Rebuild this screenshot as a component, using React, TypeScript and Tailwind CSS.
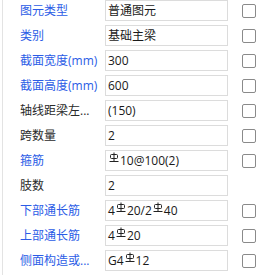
import React from 'react'

type Part = string | { steel: true }

interface Row {
  label: string
  blue: boolean
  value: Part[]
  check: boolean
}

const S: Part = { steel: true }

const rows: Row[] = [
  { label: '图元类型', blue: true, value: ['普通图元'], check: true },
  { label: '类别', blue: true, value: ['基础主梁'], check: true },
  { label: '截面宽度(mm)', blue: true, value: ['300'], check: true },
  { label: '截面高度(mm)', blue: true, value: ['600'], check: true },
  { label: '轴线距梁左...', blue: false, value: ['(150)'], check: true },
  { label: '跨数量', blue: false, value: ['2'], check: true },
  { label: '箍筋', blue: true, value: [S, '10@100(2)'], check: true },
  { label: '肢数', blue: false, value: ['2'], check: false },
  { label: '下部通长筋', blue: true, value: ['4', S, '20/2', S, '40'], check: true },
  { label: '上部通长筋', blue: true, value: ['4', S, '20'], check: true },
  { label: '侧面构造或...', blue: true, value: ['G4', S, '12'], check: true },
]

// HRB400 rebar mark
function Steel() {
  return (
    <svg width="10" height="10" viewBox="0 0 10 10" className="inline-block align-baseline mb-[3px] mx-[1px]" fill="none" stroke="#222" strokeWidth="1">
      <path d="M5 0.5V9.5" />
      <rect x="1.5" y="2.5" width="7" height="4" rx="1" />
      <path d="M0.5 9.5H9.5" />
    </svg>
  )
}

export default function App() {
  return (
    <div
      className="h-[275px] w-[273px] overflow-hidden bg-white pl-[2px] text-[12px]"
      style={{ fontFamily: '"Open Sans", "Noto Sans CJK SC", sans-serif' }}
    >
      <div className="h-full border-l border-[#e3e3e3]">
        {rows.map((r, i) => (
          <div key={i} className="flex h-[21px] mb-[4px] items-center">
            <div
              className={`w-[102px] pl-[17px] whitespace-nowrap leading-[21px] ${r.blue ? 'text-[#2b5ce6]' : 'text-[#2a2a2a]'}`}
            >
              {r.label}
            </div>
            <div className="h-[21px] w-[123px] border border-[#dcdcdc] px-[2px] leading-[19px] text-[#1a1a1a] whitespace-nowrap">
              {r.value.map((p, j) =>
                typeof p === 'string' ? <span key={j}>{p}</span> : <Steel key={j} />
              )}
            </div>
            {r.check && (
              <div className="ml-[14px] h-[14px] w-[14px] rounded-[2px] border border-[#8a8a8a]" />
            )}
          </div>
        ))}
      </div>
    </div>
  )
}
